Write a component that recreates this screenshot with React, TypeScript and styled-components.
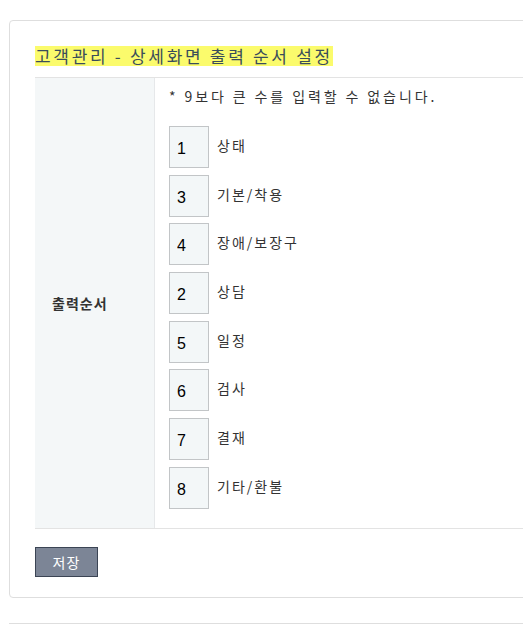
import React from "react";
import styled, { createGlobalStyle } from "styled-components";

const Global = createGlobalStyle`
  html, body { margin: 0; padding: 0; background: #fff; overflow: hidden; }
  body { font-family: "Noto Sans CJK KR", "Noto Sans", sans-serif; color: #333; }
`;

const Page = styled.div`
  padding: 20px 0 0 9px;
  width: 620px;
  display: flex;
  flex-direction: column;
  gap: 25px;
`;

const Card = styled.section`
  border: 1px solid #dedede;
  border-radius: 4px;
  padding: 23px 25px 20px 25px;
  background: #fff;
`;

const NextCard = styled.div`
  border-top: 1px solid #dedede;
  height: 10px;
`;

const Title = styled.h2`
  margin: 0 0 11px 0;
  font-size: 17px;
  font-weight: 400;
  line-height: 20px;
  letter-spacing: 2.7px;
  color: #3a4d5a;
  display: inline-block;
  background: #fbfb6c;
`;

const TitleWrap = styled.div``;

const Table = styled.div`
  display: grid;
  grid-template-columns: 120px 1fr;
  border-top: 1px solid #e3e3e3;
  border-bottom: 1px solid #e3e3e3;
`;

const LabelCell = styled.div`
  background: #f4f7f8;
  border-right: 1px solid #e6e8ea;
  display: flex;
  align-items: center;
  padding-left: 17px;
  font-size: 14px;
  font-weight: 700;
  color: #333;
  letter-spacing: 1px;
`;

const ValueCell = styled.div`
  padding: 8px 14px 19px 14px;
  display: flex;
  flex-direction: column;
`;

const Notice = styled.p`
  margin: 0 0 20px 0;
  font-size: 14px;
  line-height: 20px;
  letter-spacing: 2.9px;
  color: #333;
`;

const List = styled.div`
  display: flex;
  flex-direction: column;
  gap: 6.7px;
`;

const Row = styled.div`
  display: flex;
  align-items: center;
  gap: 8px;
`;

const OrderInput = styled.input`
  box-sizing: border-box;
  width: 40px;
  height: 42px;
  border: 1px solid #c2c5c7;
  background: #f3f7f8;
  padding: 4px 0 0 7px;
  font-family: "Liberation Sans", Arial, sans-serif;
  font-weight: 400;
  font-size: 16px;
  color: #000;
  outline: none;
`;

const ItemName = styled.span`
  font-size: 14px;
  letter-spacing: 2px;
  color: #333;
  margin-top: -4px;
`;

const Footer = styled.div`
  padding-top: 18px;
`;

const SaveButton = styled.button`
  box-sizing: border-box;
  width: 63px;
  height: 30px;
  background: #7c8596;
  border: 1px solid #3b4454;
  color: #fff;
  font-family: "Noto Sans CJK KR", sans-serif;
  font-size: 14px;
  letter-spacing: 1px;
  padding: 0;
`;

const items = [
  { n: "1", label: "상태" },
  { n: "3", label: "기본/착용" },
  { n: "4", label: "장애/보장구" },
  { n: "2", label: "상담" },
  { n: "5", label: "일정" },
  { n: "6", label: "검사" },
  { n: "7", label: "결재" },
  { n: "8", label: "기타/환불" },
];

export default function App() {
  return (
    <>
      <Global />
      <Page>
        <Card>
          <TitleWrap>
            <Title>고객관리 - 상세화면 출력 순서 설정</Title>
          </TitleWrap>
          <Table>
            <LabelCell>출력순서</LabelCell>
            <ValueCell>
              <Notice>* 9보다 큰 수를 입력할 수 없습니다.</Notice>
              <List>
                {items.map((it) => (
                  <Row key={it.label}>
                    <OrderInput defaultValue={it.n} />
                    <ItemName>{it.label}</ItemName>
                  </Row>
                ))}
              </List>
            </ValueCell>
          </Table>
          <Footer>
            <SaveButton>저장</SaveButton>
          </Footer>
        </Card>
        <NextCard />
      </Page>
    </>
  );
}
